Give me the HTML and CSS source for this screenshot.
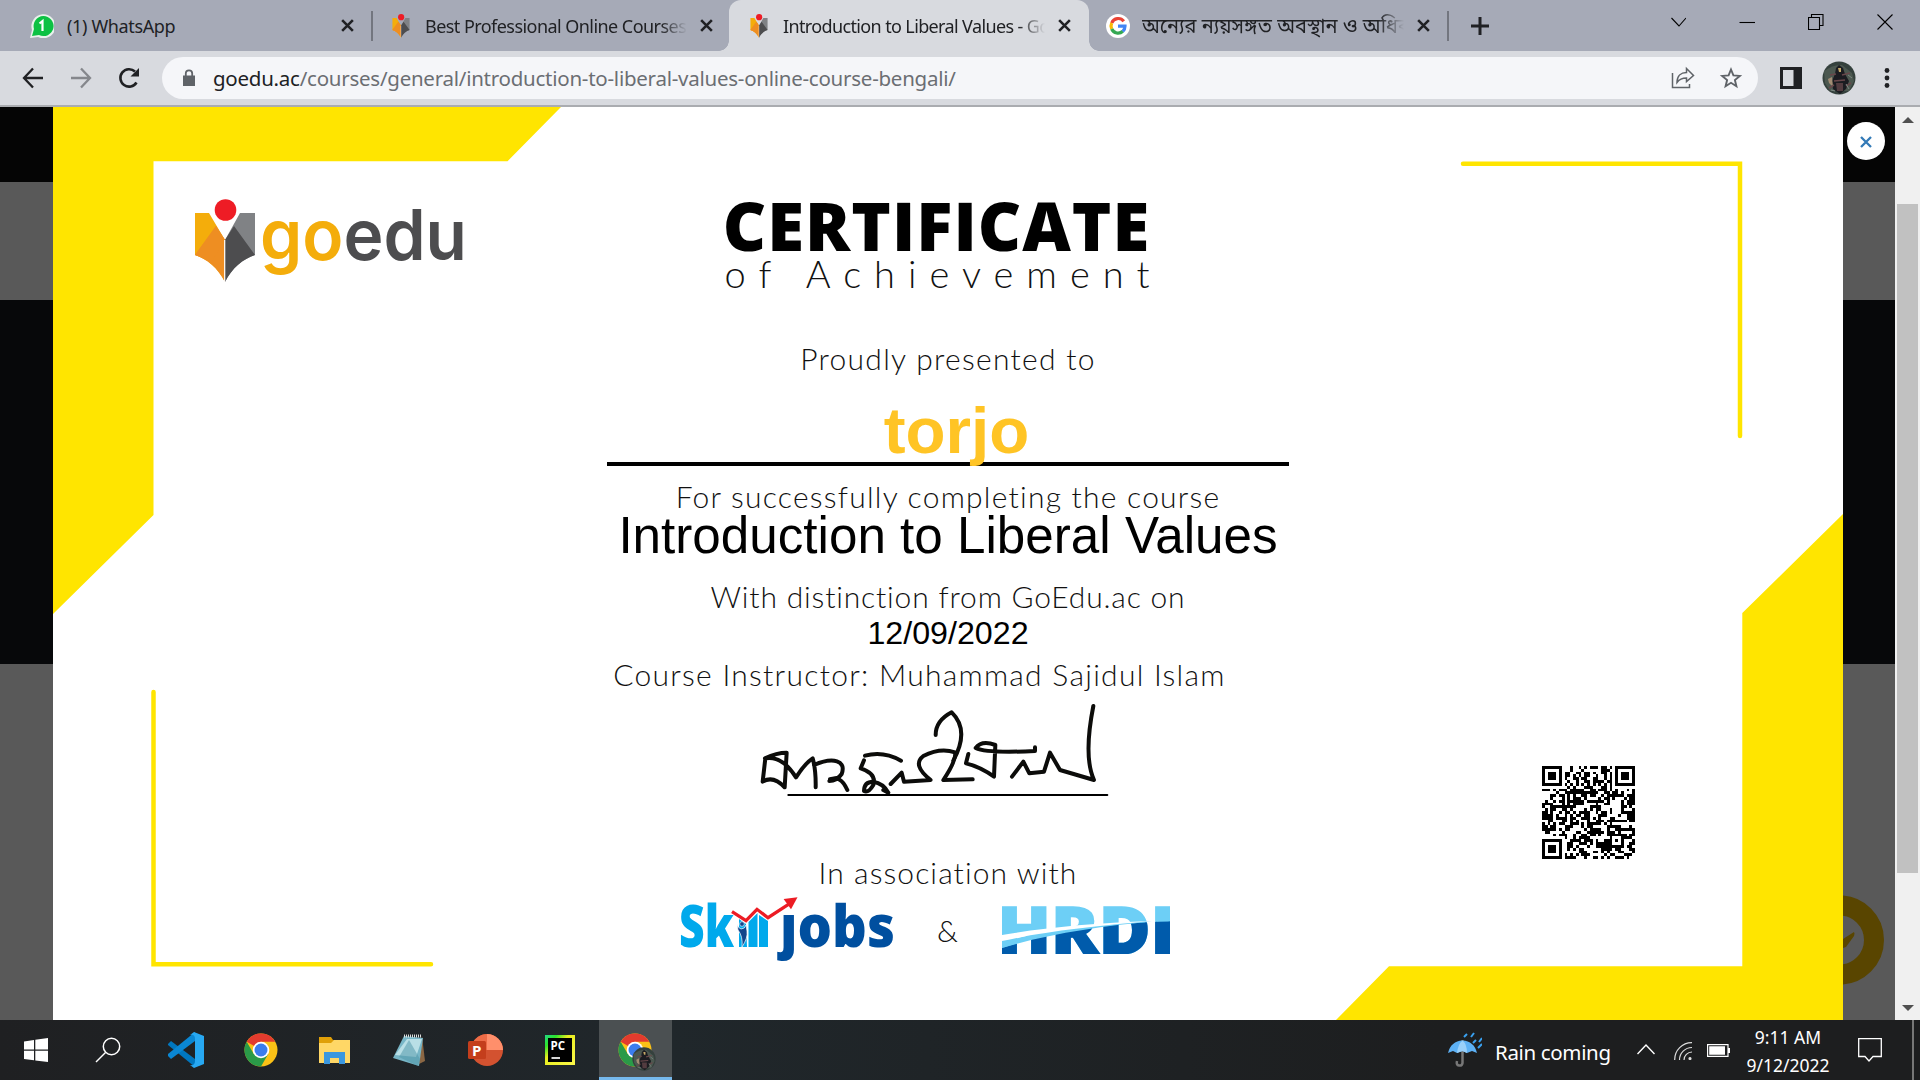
FILE: index.html
```html
<!DOCTYPE html>
<html lang="en">
<head>
<meta charset="utf-8">
<title>Introduction to Liberal Values - GoEdu</title>
<link rel="stylesheet" href="styles.css">
</head>
<body>
<svg width="0" height="0" class="defs">
  <symbol id="x" viewBox="0 0 14 14"><path d="M2 2L12 12M12 2L2 12" fill="none" stroke="#202124" stroke-width="2.4"/></symbol>
  <symbol id="book" viewBox="0 0 60 84">
    <path d="M0 14H14L30 41V83C23 69 12 60 0 56Z" fill="#f4ad0b"/>
    <path d="M21 27L30 41V83C23 69 12 60 0 56Z" fill="#ee8e22"/>
    <path d="M60 14H45L30 41V83C37 69 48 60 60 56Z" fill="#808285"/>
    <path d="M39 27L30 41V83C37 69 48 60 60 56Z" fill="#4d4d4f"/>
    <path d="M21 27L0 56Q10 59 16 64L30 41Z" fill="#ee8e22"/>
    <path d="M29.700 41V83" stroke="#fff" stroke-width="1.200"/>
    <circle cx="30.500" cy="11" r="10.800" fill="#ee1c25"/>
  </symbol>
  <symbol id="chrome" viewBox="0 0 34 34">
    <circle cx="17" cy="17" r="16.500" fill="#fbc116"/>
    <path d="M17 17L2.700 8.750A16.500 16.500 0 0 1 31.300 8.750H17Z" fill="#e33b2e"/>
    <path d="M2.700 8.750A16.500 16.500 0 0 0 17 33.500L24.200 21.100L17 17L9.800 21.100Z" fill="#2a9a48"/>
    <circle cx="17" cy="17" r="8.300" fill="#fff"/><circle cx="17" cy="17" r="6.500" fill="#3b7ded"/>
  </symbol>
  <symbol id="avatar" viewBox="0 0 34 34">
    <circle cx="17" cy="17" r="16.500" fill="#35413d"/>
    <path d="M2 10Q12 3 20 4L30 12L32 20L27 30L8 30L3 22Z" fill="#4c5850"/>
    <path d="M14 7L17 4L21 7L23 13L27 20L24 28L18 33L11 28L10 20L13 13Z" fill="#1b1c21"/>
    <path d="M14 22H21V30H15Z" fill="#533c40"/>
    <path d="M6 18L10 16L11 26L7 22Z" fill="#a28c73"/><path d="M16 7H19V11H17Z" fill="#c5a867"/>
    <path d="M8 14L14 13M20 14L28 12M12 20L23 19M7 27L12 24M24 25L29 22" stroke="#68474a" stroke-width="1.500"/>
    <path d="M26 14L30 17M24 23L27 28M9 29L13 30" stroke="#7b8781"/>
  </symbol>
</svg>

<header class="tabs">
  <div class="tab first">
    <svg class="fav" viewBox="0 0 24 24"><path d="M0 24L2 16A12 12 0 1 1 8 23Z" fill="#e9f2ec"/><path d="M2 22L4 15A10 10 0 1 1 9 21Z" fill="#0cc143"/><path d="M9.500 9.500L12.500 7V17" fill="none" stroke="#fff" stroke-width="2.200"/></svg>
    <span class="title t1">(1) WhatsApp</span><svg class="close"><use href="#x"/></svg>
  </div>
  <div class="tab second">
    <svg class="fav"><use href="#book"/></svg>
    <span class="title fade t2">Best Professional Online Courses in</span><svg class="close"><use href="#x"/></svg>
  </div>
  <div class="tab active">
    <svg class="fav"><use href="#book"/></svg>
    <span class="title fade t3">Introduction to Liberal Values - Go</span><svg class="close"><use href="#x"/></svg>
  </div>
  <div class="tab fourth">
    <svg class="fav" viewBox="0 0 24 24"><circle cx="12" cy="12" r="12" fill="#fff"/><g fill="none" stroke-width="3.200"><path d="M17.800 7.300A7 7 0 0 0 5.700 9" stroke="#ea4335"/><path d="M5.700 9A7 7 0 0 0 5.700 15" stroke="#fbbc05"/><path d="M5.700 15A7 7 0 0 0 16.800 17.300" stroke="#34a853"/><path d="M16.800 17.300A7 7 0 0 0 19 12.200H12" stroke="#4285f4"/></g></svg>
    <span class="title fade t4" lang="bn">অন্যের ন্যয়সঙ্গত অবস্থান ও অধিক</span><svg class="close"><use href="#x"/></svg>
  </div>
  <svg class="newtab" viewBox="0 0 18 18"><path d="M9 0V18M0 9H18" stroke="#202124" stroke-width="3"/></svg>
  <div class="controls">
    <svg viewBox="0 0 16 16"><path d="M1.500 4L9 12L16 4" /></svg>
    <svg viewBox="0 0 16 16"><path d="M.5 8.500H16"/></svg>
    <svg viewBox="0 0 16 16"><path d="M.5 3.500H11.500V15.500H.5ZM3.500 3.500V.5H15V11.500H11.500"/></svg>
    <svg viewBox="0 0 16 16"><path d="M.5 .5L15.500 15.500M15.500 .5L.5 15.500"/></svg>
  </div>
</header>

<nav class="toolbar">
  <svg class="nav" viewBox="0 0 24 24"><path d="M22 12H3.500M12 2.500L3 12L12 21.500" fill="none" stroke="#202124" stroke-width="2.300"/></svg>
  <svg class="nav" viewBox="0 0 24 24"><path d="M2 12H20.500M12 2.500L21 12L12 21.500" fill="none" stroke="#85878c" stroke-width="2.300"/></svg>
  <svg class="nav" viewBox="0 0 24 24"><path d="M19.500 16.500A8.700 8.700 0 1 1 18 5.500" fill="none" stroke="#202124" stroke-width="2.600"/><path d="M22 2V10.500H13.500Z" fill="#202124"/></svg>
  <div class="address">
    <svg class="lock" viewBox="0 0 14 18"><path d="M1 6.500H13V17H1Z" fill="#5f6368"/><path d="M3.800 7V4.500A3.200 3.200 0 0 1 10.200 4.500V7" fill="none" stroke="#5f6368" stroke-width="1.800"/></svg>
    <span class="url"><b>goedu.ac</b>/courses/general/introduction-to-liberal-values-online-course-bengali/</span>
    <svg class="act" viewBox="0 0 24 24" fill="none" stroke="#5f6368" stroke-width="1.500"><path d="M1.500 7V21.500H18.500V18"/><path d="M6 16.500C6 10 10 6.500 15.500 6.500V2.500L22.500 9.500L15.500 15.500V12C11 12 8.500 13 6 16.500Z"/></svg>
    <svg class="act" viewBox="0 0 24 24"><path d="M12 3.500L14.400 9.400L20.800 9.900L15.900 14L17.400 20.200L12 16.800L6.600 20.200L8.100 14L3.200 9.900L9.600 9.400Z" fill="none" stroke="#5f6368" stroke-width="1.900"/></svg>
  </div>
  <svg class="panel" viewBox="0 0 22 22"><path d="M0 0H22V22H0ZM3 3V19H13.500V3Z" fill="#202124" fill-rule="evenodd"/></svg>
  <svg class="me"><use href="#avatar"/></svg>
  <svg class="dots" viewBox="0 0 6 20" fill="#202124"><circle cx="3" cy="2.500" r="2.400"/><circle cx="3" cy="10" r="2.400"/><circle cx="3" cy="17.500" r="2.400"/></svg>
</nav>

<main>
  <section class="certificate">
    <svg class="frame" viewBox="53 107 1790 913">
      <path d="M53 107H561L507.500 161.300H153.500V515L53 614ZM1843 514L1742.300 613V966.300H1389L1336 1020H1843Z" fill="#ffe500"/>
      <path d="M1463 163.800H1740V436M153.500 692V964.300H431" fill="none" stroke="#ffe500" stroke-width="4.500" stroke-linecap="round"/>
    </svg>
    <svg class="brand" viewBox="0 0 275 90">
      <svg width="60" height="84"><use href="#book"/></svg>
      <text class="brand-text" x="65" y="61" textLength="207" lengthAdjust="spacingAndGlyphs"><tspan fill="#f4ad0b">go</tspan><tspan fill="#4d4d4f">edu</tspan></text>
    </svg>
    <div class="content">
      <h1>CERTIFICATE</h1>
      <p class="light sub">of Achievement</p>
      <p class="light presented">Proudly presented to</p>
      <p class="name">torjo</p>
      <p class="light completing">For successfully completing the course</p>
      <p class="course">Introduction to Liberal Values</p>
      <p class="light distinction">With distinction from GoEdu.ac on</p>
      <p class="date">12/09/2022</p>
      <p class="light instructor">Course Instructor: Muhammad Sajidul Islam</p>
      <svg class="signature" viewBox="0 18 1200 312" fill="none" stroke="#0c0c0a" stroke-width="12" stroke-linecap="round" stroke-linejoin="round">
        <path d="M75 205Q110 188 140 188L134 292Q100 255 68 275L76 205Q125 195 168 262Q195 220 218 205Q228 240 227 292M222 225C280 200 320 212 305 252Q290 273 268 273Q300 250 322 300M270 268L290 264"/>
        <path d="M375 197Q430 182 483 212M372 211L362 235Q410 250 400 285Q385 310 372 303Q372 275 400 275Q430 280 445 308L430 300M452 282L485 248L492 275L572 270Q515 225 550 198Q600 172 645 187Q650 210 610 270L698 268"/>
        <path d="M587 135Q587 92 635 67Q690 120 640 212M685 192L678 220Q720 230 762 260L766 165Q725 150 707 174Q740 190 885 183V172M816 260L850 215L868 250L912 245L930 188L960 240L1062 270Q1030 200 1060 48"/>
        <path d="M145 315H1102" stroke="#000" stroke-width="6"/>
      </svg>
      <p class="light association">In association with</p>
      <div class="partners">
        <svg class="skill" viewBox="0 0 216 70">
          <defs><clipPath id="nodot"><path d="M90 19H150V0H216V70H90Z"/></clipPath></defs>
          <text x="-1" y="54" textLength="55" lengthAdjust="spacingAndGlyphs" fill="#00a9ec">Sk</text>
          <path d="M59 26L66 31L67 54H59ZM68.500 29L77.500 20V54H68.500ZM79 22L88 28V54H79Z" fill="#00a9ec"/>
          <path d="M57 31Q58 35 61 36Q65 36 66 32L67 38Q68 45 62 54Q63 43 58 37Z" fill="#12448b" stroke="#fff" stroke-width=".7"/><circle cx="62" cy="31" r="2.300" fill="#12448b" stroke="#fff" stroke-width=".6"/>
          <text x="100" y="54" textLength="115" lengthAdjust="spacingAndGlyphs" fill="#004f9f" clip-path="url(#nodot)">jobs</text>
          <path d="M52 18.700L66 27.700L77 16.300L88 24.700L110 10.300" fill="none" stroke="#ec1c24" stroke-width="3.200"/>
          <path d="M117.500 4.300L103.600 6L111 16.300Z" fill="#ec1c24"/>
        </svg>
        <span class="light amp">&amp;</span>
        <svg class="hrdi" viewBox="0 0 168 48">
          <defs><clipPath id="low"><path d="M0 42C40 28 100 17 168 15.500V48H0Z"/></clipPath></defs>
          <g stroke-width="1.500">
          <text x="-5" y="47.500" textLength="178" lengthAdjust="spacingAndGlyphs" fill="#6dcff6" stroke="#6dcff6">HRDI</text>
          <text x="-5" y="47.500" textLength="178" lengthAdjust="spacingAndGlyphs" fill="#005bab" stroke="#005bab" clip-path="url(#low)">HRDI</text>
          </g>
          <path d="M0 36C40 25 90 17 150 15.500C100 20 45 28 0 42Z" fill="#6dcff6"/>
          <path d="M0 29C40 22 90 17 150 15C90 20 40 26 0 35Z" fill="#fff"/>
        </svg>
      </div>
    </div>
    <svg class="qr" id="qr" viewBox="0 0 33 33" shape-rendering="crispEdges"></svg>
  </section>
  <aside class="side">
    <button class="dismiss"><svg viewBox="0 0 12 12"><path d="M1 1L11 11M11 1L1 11" stroke="#337ab7" stroke-width="2.300"/></svg></button>
    <svg class="chat" viewBox="0 0 52 110"><circle cx="-3.500" cy="45" r="34.500" fill="none" stroke="#594500" stroke-width="20"/><path d="M0 44L11 37Q12 38 11 41L3 52L0 53Z" fill="#594500"/></svg>
  </aside>
  <div class="scroll">
    <svg viewBox="0 0 12 6"><path d="M0 6L6 0L12 6Z" fill="#505050"/></svg>
    <div class="thumb"></div>
    <svg viewBox="0 0 12 6"><path d="M0 0L6 6L12 0Z" fill="#505050"/></svg>
  </div>
</main>

<footer class="taskbar">
  <div class="apps">
    <svg viewBox="0 0 36 36"><path d="M6 9.500L16 8V17.500H6ZM17.300 7.800L30 6V17.500H17.300ZM6 18.700H16V28.300L6 27ZM17.300 18.700H30V30L17.300 28.500Z" fill="#fff"/></svg>
    <svg viewBox="3 0 36 36"><circle cx="21.500" cy="14.500" r="8.200" fill="none" stroke="#fff" stroke-width="1.500"/><path d="M15.500 20.500L6 30" stroke="#fff" stroke-width="1.500"/></svg>
    <svg viewBox="0 0 36 36"><path d="M0 12L3 9L27 27V35L0 13Z" fill="#0077c0"/><path d="M0 24L3 27L27 9V0L0 22Z" fill="#0a87d4"/><path d="M26 0L36 4V32L26 36L22 33Q27 34 27 29V7Q27 2 22 3Z" fill="#27a8f2"/></svg>
    <svg viewBox="-1 -1 36 36"><use href="#chrome" width="34" height="34"/></svg>
    <svg viewBox="0 0 36 36"><path d="M2 5H14L16 8H33V18H2Z" fill="#e0a008"/><path d="M2 11H14L17 8H33V31H2Z" fill="#ffd766"/><path d="M7 32V20H28V32H22V26H13V32Z" fill="#3b97de"/></svg>
    <svg viewBox="1 0 36 36"><path d="M31 4L34 29L28 32Z" fill="#8b6744"/><path d="M13 4L32 6L28 34L2 26Z" fill="#78b6c7"/><path d="M16 7L31 7L25 25L4 23Z" fill="#b9dfe6"/><path d="M8 25L18 8L29 27L27 34Z" fill="#4c93a6" opacity=".5"/><path d="M13 4H31" stroke="#ddd" stroke-width="3" stroke-dasharray="1 1"/></svg>
    <svg viewBox="0 0 36 36"><circle cx="20" cy="18" r="16" fill="#d35230"/><path d="M20 2A16 16 0 0 1 36 18H20Z" fill="#ff8f6b"/><path d="M20 2A16 16 0 0 0 5 12V18H20Z" fill="#ed6c47"/><rect x="1" y="9" width="18" height="18" rx="1.500" fill="#c43e1c"/><text x="5" y="23.500" class="ppt">P</text></svg>
    <svg viewBox="0 0 36 36"><defs><linearGradient id="pc" x2="1" y2="1"><stop stop-color="#21d789"/><stop offset=".2" stop-color="#2de32b"/><stop offset=".4" stop-color="#e8ed20"/><stop offset="1" stop-color="#fcf84a"/></linearGradient></defs><rect x="3" y="3" width="30" height="30" fill="url(#pc)"/><rect x="6" y="6" width="24" height="24" fill="#000"/><text x="8.500" y="17.500" class="pc">PC</text><path d="M9.500 26H18" stroke="#fff" stroke-width="1.700"/></svg>
    <div class="running"><svg viewBox="-1 -1 36 36"><use href="#chrome" width="34" height="34"/></svg><svg class="badge"><use href="#avatar"/></svg></div>
  </div>
  <div class="tray">
    <svg class="rain" viewBox="0 0 34 36"><path d="M14.500 8V31Q14 34 11 33.500Q8 33 9 29" fill="none" stroke="#777" stroke-width="2.500"/><path d="M0 21Q3 9 14.500 8.500Q26 9 29 21L24 19L19 21L14.500 19L9 21L5 19Z" fill="#5db1f5"/><path d="M9 21Q10 12 14.500 8.500Q19 12 19 21L14.500 19Z" fill="#99d0fa"/><path d="M16 5L19 2M23 5L26 1M25 11L28 8M31 10L34 6M30 16L34 12" stroke="#39a0ef" stroke-width="2"/></svg>
    <span class="weather">Rain coming</span>
    <svg class="caret" viewBox="0 0 18 18"><path d="M.5 13L9 4L17.500 13" fill="none" stroke="#fff" stroke-width="1.400"/></svg>
    <svg class="wifi" viewBox="0 0 18 18" fill="none" stroke="#ddd" stroke-width="1.200"><path d="M.7 18A17 17 0 0 1 18 .7M5.500 18A12.500 12.500 0 0 1 18 5.500M10 18A8 8 0 0 1 18 10"/><circle cx="16" cy="16.500" r="1" fill="#fff"/></svg>
    <svg class="battery" viewBox="0 0 23 13"><path d="M.6 .6H21V12.400H.6Z" fill="none" stroke="#fff" stroke-width="1.200"/><path d="M2.200 2.200H18V10.800H2.200ZM21 4H23V9H21Z" fill="#fff"/></svg>
    <div class="clock"><span>9:11 AM</span><span>9/12/2022</span></div>
    <svg class="note" viewBox="0 0 24 24"><path d="M.7 .7H23.300V18.500H15L11 23L7 18.500H.7Z" fill="none" stroke="#fff" stroke-width="1.300"/></svg>
  </div>
</footer>
<script src="qr.js"></script>
</body>
</html>
```
FILE: styles.css
```css
* { box-sizing: border-box; }
body {
  margin: 0; width: 1920px; height: 1080px; overflow: hidden;
  display: grid; grid-template-rows: 51px 56px 913px 60px;
  font-family: "Noto Sans", "Noto Sans Bengali", sans-serif; color: #202124;
}
svg { display: block; flex: none; }
.defs { position: absolute; }
p, h1 { margin: 0; }

.tabs { background: #a6aab7; display: flex; align-items: center; }
.tab { display: flex; align-items: center; height: 51px; position: relative; }
.first { width: 371px; padding-left: 30px; }
.second { width: 358px; }
.second::before, .fourth::after {
  content: ""; flex: none; width: 2px; height: 30px; background: #73767f; margin-right: 16px;
}
.active { width: 360px; height: 51px; padding-left: 18px; background: #d8dadf; border-radius: 12px 12px 0 0; }
.active::before, .active::after {
  content: ""; position: absolute; bottom: 0; width: 10px; height: 10px;
}
.active::before { left: -10px; background: radial-gradient(circle at 0 0, transparent 9.500px, #d8dadf 10px); }
.active::after { right: -10px; background: radial-gradient(circle at 100% 0, transparent 9.500px, #d8dadf 10px); }
.fourth { width: 359px; padding-left: 17px; }
.fourth::after { margin: 0 0 0 16px; }
.fav { width: 24px; height: 24px; }
.title { font-size: 18px; white-space: nowrap; overflow: hidden; margin-left: 12px; width: 262px; margin-right: 12px; flex: none; line-height: 34px; }
.first .title { width: 261px; margin-left: 13px; }
.second .title { width: 262px; }
.fade { -webkit-mask-image: linear-gradient(90deg, #000 90%, transparent); mask-image: linear-gradient(90deg, #000 90%, transparent); }
.t1 { letter-spacing: -.35px; }
.t2 { letter-spacing: -.55px; }
.t3 { letter-spacing: -.63px; }
.t4 { font-size: 20px; }
.close { width: 15px; height: 15px; }
.newtab { width: 18px; height: 18px; margin-left: 23px; }
.controls { display: flex; gap: 53px; margin-left: auto; padding-right: 27px; padding-bottom: 8px; }
.controls svg { width: 16px; height: 16px; fill: none; stroke: #000; stroke-width: 1.100; }

.toolbar { background: #d8dadf; border-bottom: 2px solid #aaacb0; display: flex; align-items: center; padding-left: 21px; }
.nav { width: 24px; height: 24px; margin-right: 24px; }
.address { margin-left: -3px; width: 1596px; height: 42px; border-radius: 21px; background: #f5f6f9; display: flex; align-items: center; padding-left: 20px; }
.lock { width: 14px; height: 18px; }
.url { margin-left: 17px; font-size: 20.500px; color: #6b6e73; flex: 1; letter-spacing: -.25px; line-height: 30px; }
.url b { font-weight: 400; color: #202124; }
.act { width: 24px; height: 24px; margin-right: 24px; }
.act + .act { margin-right: 15px; }
.panel { width: 22px; height: 22px; margin-left: 22px; }
.me { width: 34px; height: 34px; margin-left: 20px; }
.dots { width: 6px; height: 20px; margin-left: 28px; }

main {
  display: grid; grid-template-columns: 1790px 52px 25px; padding-left: 53px;
  background: linear-gradient(#050505 75px, #595959 75px 193px, #07080a 193px 557px, #595959 557px);
}
.certificate { background: #fff; display: grid; height: 913px; }
.certificate > * { grid-area: 1 / 1; }
.frame { width: 1790px; height: 913px; }
.brand { width: 275px; height: 90px; margin: 92px 0 0 142px; overflow: visible; }
.brand-text { font: 600 70px Inter, sans-serif; }
.content { display: flex; flex-direction: column; align-items: center; padding-top: 93px; color: #000; white-space: nowrap; }
.light { font-family: Lato, sans-serif; font-weight: 300; font-size: 30px; color: #111; }
h1 { font: 800 67px/50px "Open Sans", sans-serif; letter-spacing: 1px; margin-right: 23px; }
.sub { font-size: 38px; line-height: 46px; letter-spacing: 13px; margin-right: 9px; }
.presented { margin-top: 42px; line-height: 40px; letter-spacing: 1.290px; }
.name { margin-top: 20px; width: 682px; height: 68px; border-bottom: 4px solid #000; padding-left: 17px; text-align: center; font: 700 65.500px/66px "Liberation Sans", sans-serif; color: #ffc425; }
.completing { margin-top: 12px; line-height: 36px; letter-spacing: 1.230px; }
.course { font: 51.200px/44px "Liberation Sans", sans-serif; height: 42px; }
.distinction { margin-top: 22px; line-height: 36px; height: 35px; letter-spacing: .820px; }
.date { font: 32.200px/40px "Liberation Sans", sans-serif; }
.instructor { line-height: 42px; height: 43px; margin-right: 57px; letter-spacing: 1.270px; }
.signature { width: 400px; height: 104px; margin-right: 16px; }
.association { margin-top: 53px; line-height: 39px; height: 40px; letter-spacing: 1.080px; }
.partners { display: flex; height: 70px; width: 490px; margin-right: 46px; }
.skill { width: 216px; height: 70px; font: 800 59px "Open Sans", sans-serif; }
.amp { width: 22px; margin-left: 41px; line-height: 75px; }
.hrdi { width: 168px; height: 48px; margin: 13px 0 0 43px; font: 800 65px "Open Sans", sans-serif; }
.qr { width: 93px; height: 93px; margin: 659px 0 0 1489px; }

.side { display: flex; flex-direction: column; justify-content: space-between; }
.dismiss { width: 38px; height: 38px; border: 0; border-radius: 50%; background: #fff; margin: 15px 0 0 4px; padding: 2px 0 0; display: grid; place-items: center; }
.dismiss svg { width: 12px; height: 12px; }
.chat { width: 52px; height: 110px; margin-bottom: 15px; }
.scroll { background: #f0f0f0; display: flex; flex-direction: column; align-items: center; padding-top: 10px; }
.scroll svg { width: 12px; height: 6px; }
.thumb { width: 21px; height: 669px; background: #c1c1c1; margin: 81px 0 132px; }

.taskbar { background: linear-gradient(90deg, #1f2022, #20272b 35%, #1d1e1f 75%); display: flex; justify-content: space-between; color: #fff; }
.apps { display: flex; align-items: center; padding-left: 18px; gap: 38.850px; }
.apps svg { width: 36px; height: 36px; }
.ppt { font: 700 15px "Open Sans", sans-serif; fill: #fff; }
.pc { font: 700 11.500px "Open Sans", sans-serif; fill: #fff; }
.running { width: 73px; height: 60px; background: #4b5052; border-bottom: 3px solid #76b9ed; display: grid; place-items: center; margin-left: -17.800px; padding-top: 3px; position: relative; }
.apps .badge { position: absolute; left: 33px; top: 27px; width: 24px; height: 24px; }
.tray { display: flex; align-items: center; width: 472px; }
.tray::after { content: ""; width: 2px; height: 60px; background: #777; margin-left: 30px; }
.rain { width: 34px; height: 36px; }
.weather { width: 141px; padding-left: 13px; font-size: 20.500px; letter-spacing: -.350px; white-space: nowrap; margin-top: 4px; }
.caret { width: 18px; height: 18px; margin-left: 14px; }
.wifi { width: 18px; height: 18px; margin-left: 19px; margin-top: 2px; }
.battery { width: 23px; height: 13px; margin-left: 15px; }
.clock { width: 100px; margin-left: 8px; display: flex; flex-direction: column; align-items: center; font-size: 17.500px; line-height: 28px; padding-top: 2px; }
.note { width: 24px; height: 24px; margin-left: 20px; }
```
FILE: qr.js
```js
// Draws a 33x33 code: finder patterns, timing lines, alignment mark and data cells.
(function () {
  var n = 33, seed = 20220912, d = "";
  function rnd() { seed = (seed * 1103515245 + 12345) % 2147483648; return seed / 2147483648; }
  function ring(x, y, cx, cy, edge) {
    var r = Math.max(Math.abs(x - cx), Math.abs(y - cy));
    if (r > edge) return null;
    return edge === 4 ? (r <= 1 || r === 3) : (r === 0 || r === 2);
  }
  for (var y = 0; y < n; y++) for (var x = 0; x < n; x++) {
    var on = rnd() < 0.53, v;
    if (x === 6 || y === 6) on = (x + y) % 2 === 0;
    [[3, 3, 4], [29, 3, 4], [3, 29, 4], [26, 26, 2]].forEach(function (p) {
      v = ring(x, y, p[0], p[1], p[2]);
      if (v !== null) on = v;
    });
    if (on) d += "M" + x + " " + y + "h1v1h-1z";
  }
  document.getElementById("qr").innerHTML = '<path d="' + d + '"/>';
})();
```
